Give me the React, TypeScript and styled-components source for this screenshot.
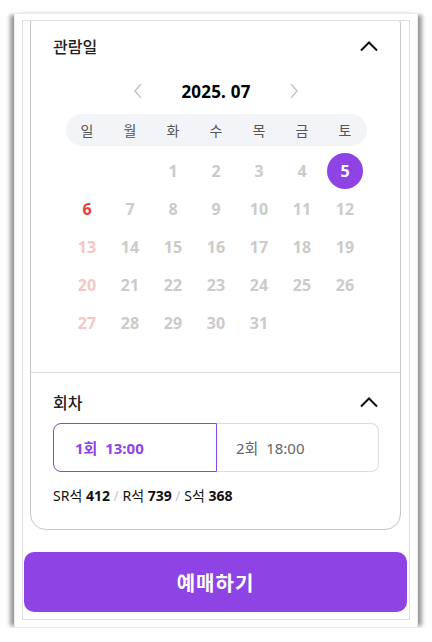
import React from "react";
import styled, { createGlobalStyle } from "styled-components";

const GlobalStyle = createGlobalStyle`
  html, body { margin: 0; padding: 0; background: #fff; }
  body { font-family: "Noto Sans", "Noto Sans CJK KR", sans-serif; color: #111; }
  * { box-sizing: border-box; }
`;

const PURPLE = "#8e44e4";

const Frame = styled.div`
  margin: 13px 0 0 14px;
  width: 404px;
  height: 615px;
  padding: 6px 7px 7px 7px;
  background: #fff;
  border: 1px solid #ececec;
  box-shadow: -6px 0 4px -2px rgba(0, 0, 0, 0.4), 6px 0 4px -2px rgba(0, 0, 0, 0.4);
`;

const Viewport = styled.div`
  height: 100%;
  border: 1px solid #e0e0e0;
  overflow: hidden;
  padding: 0 8px 0 7px;
`;

const Card = styled.div`
  margin-top: -13px;
  border: 1px solid #c4c6cc;
  border-radius: 16px;
  background: #fff;
`;

const Section = styled.div<{ $top: number; $bottom: number; $divider?: boolean }>`
  padding: ${(p) => p.$top}px 21px ${(p) => p.$bottom}px 22px;
  border-top: ${(p) => (p.$divider ? "1px solid #dcdce0" : "none")};
`;

const SectionHead = styled.div`
  height: 24px;
  display: flex;
  align-items: center;
  justify-content: space-between;
`;

const Title = styled.div`
  font-family: "Noto Sans CJK KR", sans-serif;
  font-size: 16px;
  font-weight: 500;
  color: #222;
`;

const MonthRow = styled.div`
  margin-top: 19px;
  height: 28px;
  display: flex;
  align-items: center;
  justify-content: center;
`;

const MonthLabel = styled.div`
  width: 134px;
  text-align: center;
  font-size: 17px;
  font-weight: 700;
  color: #000;
  letter-spacing: 0.2px;
`;

const NavBtn = styled.div`
  width: 22px;
  display: flex;
  justify-content: center;
`;

const WeekBar = styled.div`
  margin: 9px auto 0;
  width: 301px;
  height: 32px;
  border-radius: 16px;
  background: #f3f4f8;
  display: grid;
  grid-template-columns: repeat(7, 43px);
  align-items: center;
`;

const WeekDay = styled.div`
  text-align: center;
  font-family: "Noto Sans CJK KR", sans-serif;
  font-size: 14px;
  color: #555;
`;

const DayGrid = styled.div`
  margin: 6px auto 0;
  width: 301px;
  display: grid;
  grid-template-columns: repeat(7, 43px);
  grid-auto-rows: 38px;
`;

const Day = styled.div<{ $color: string; $selected?: boolean }>`
  display: flex;
  align-items: center;
  justify-content: center;
  font-size: 16px;
  font-weight: 700;
  color: ${(p) => (p.$selected ? "#fff" : p.$color)};
  span {
    width: 36px;
    height: 36px;
    border-radius: 50%;
    display: flex;
    align-items: center;
    justify-content: center;
    background: ${(p) => (p.$selected ? PURPLE : "transparent")};
  }
`;

const TimeRow = styled.div`
  margin-top: 9px;
  display: grid;
  grid-template-columns: 164px 1fr;
  height: 49px;
`;

const TimeOption = styled.div<{ $active?: boolean }>`
  display: flex;
  align-items: center;
  padding-left: ${(p) => (p.$active ? 21 : 19)}px;
  font-family: "Noto Sans", "Noto Sans CJK KR", sans-serif;
  font-size: 15px;
  font-weight: ${(p) => (p.$active ? 700 : 400)};
  color: ${(p) => (p.$active ? PURPLE : "#666")};
  border: 1px solid ${(p) => (p.$active ? PURPLE : "#dcdce0")};
  border-left: ${(p) => (p.$active ? `1px solid ${PURPLE}` : "none")};
  border-radius: ${(p) => (p.$active ? "8px 0 0 8px" : "0 8px 8px 0")};
  white-space: pre;
`;

const SeatInfo = styled.div`
  margin-top: 15px;
  height: 18px;
  line-height: 18px;
  font-family: "Noto Sans", "Noto Sans CJK KR", sans-serif;
  font-size: 14px;
  color: #111;
  b { font-weight: 700; }
`;

const Slash = styled.span`
  color: #c8c8c8;
`;

const BookButton = styled.button`
  margin: 22px -6px 0;
  width: calc(100% + 12px);
  height: 60px;
  border: none;
  border-radius: 10px;
  background: ${PURPLE};
  color: #fff;
  font-family: "Noto Sans CJK KR", sans-serif;
  font-size: 20px;
  font-weight: 700;
  letter-spacing: 1px;
  cursor: pointer;
`;

const ChevronUp = () => (
  <svg width="20" height="12" viewBox="0 0 20 12">
    <polyline points="2,10.5 10,2.5 18,10.5" fill="none" stroke="#111" strokeWidth="2" />
  </svg>
);

const Chevron = ({ dir }: { dir: "left" | "right" }) => (
  <svg width="10" height="18" viewBox="0 0 10 18">
    <polyline
      points={dir === "left" ? "8,2 2,9 8,16" : "2,2 8,9 2,16"}
      fill="none"
      stroke="#c4c4c4"
      strokeWidth="1.4"
    />
  </svg>
);

const weekDays = ["일", "월", "화", "수", "목", "금", "토"];

const dayColor = (d: number) => {
  if (d === 6) return "#f03a3a";
  if (d % 7 === 6) return "#f6c6c6";
  return "#cbcbcb";
};

export default function App() {
  const cells: (number | null)[] = [null, null];
  for (let d = 1; d <= 31; d++) cells.push(d);

  return (
    <>
      <GlobalStyle />
      <Frame>
        <Viewport>
          <Card>
            <Section $top={25} $bottom={30}>
              <SectionHead>
                <Title>관람일</Title>
                <ChevronUp />
              </SectionHead>
              <MonthRow>
                <NavBtn>
                  <Chevron dir="left" />
                </NavBtn>
                <MonthLabel>2025. 07</MonthLabel>
                <NavBtn>
                  <Chevron dir="right" />
                </NavBtn>
              </MonthRow>
              <WeekBar>
                {weekDays.map((w) => (
                  <WeekDay key={w}>{w}</WeekDay>
                ))}
              </WeekBar>
              <DayGrid>
                {cells.map((d, i) => (
                  <Day key={i} $color={d ? dayColor(d) : "#ccc"} $selected={d === 5}>
                    {d && <span>{d}</span>}
                  </Day>
                ))}
              </DayGrid>
            </Section>
            <Section $top={17} $bottom={24} $divider>
              <SectionHead>
                <Title>회차</Title>
                <ChevronUp />
              </SectionHead>
              <TimeRow>
                <TimeOption $active>1회  13:00</TimeOption>
                <TimeOption>2회  18:00</TimeOption>
              </TimeRow>
              <SeatInfo>
                SR석 <b>412</b> <Slash>/</Slash> R석 <b>739</b> <Slash>/</Slash> S석 <b>368</b>
              </SeatInfo>
            </Section>
          </Card>
          <BookButton>예매하기</BookButton>
        </Viewport>
      </Frame>
    </>
  );
}
